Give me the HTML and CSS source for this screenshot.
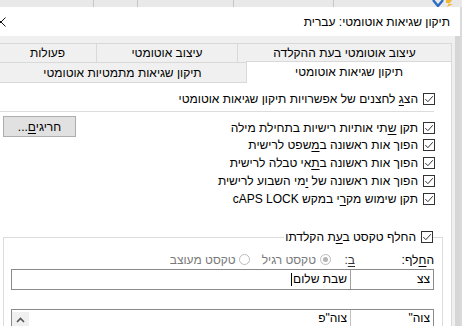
FILE: index.html
```html
<!DOCTYPE html>
<html lang="he" dir="rtl">
<head>
<meta charset="utf-8">
<link rel="stylesheet" href="styles.css">
</head>
<body>
<div class="ribbon">
  <span class="seg s1"></span><span class="seg s2"></span><span class="seg s3"></span><span class="seg s4"></span>
  <svg class="ricon" viewBox="0 0 24 7" width="24" height="7"><path d="M1 0 L6 6 L11 0" fill="none" stroke="#2b6cc4" stroke-width="2.4"/><path d="M14 0 L20 0 L17 4 L21 4 L15 7 L17 3 L14 3 Z" fill="#f2b632"/></svg>
</div>
<div class="dialog">
  <div class="titlebar">
    <span class="title">תיקון שגיאות אוטומטי: עברית</span>
    <svg class="close" viewBox="0 0 10 10" width="10" height="10"><path d="M0.5 0.5 L9.5 9.5 M9.5 0.5 L0.5 9.5" stroke="#111" stroke-width="1"/></svg>
  </div>
  <div class="dbody">
    <div class="tabrow row1">
      <div class="tab w1">עיצוב אוטומטי בעת ההקלדה</div>
      <div class="tab w2">עיצוב אוטומטי</div>
      <div class="tab grow">פעולות</div>
    </div>
    <div class="tabrow row2">
      <div class="tab sel">תיקון שגיאות אוטומטי</div>
      <div class="tab grow">תיקון שגיאות מתמטיות אוטומטי</div>
    </div>
    <div class="panel">
      <div class="chk first">
        <svg class="box" viewBox="0 0 12 12"><rect x=".5" y=".5" width="11" height="11" fill="#fff" stroke="#333"/><path d="M2.3 6.1 L4.9 8.7 L9.8 3.2" fill="none" stroke="#333"/></svg>
        <span>הצ<u>ג</u> לחצנים של אפשרויות תיקון שגיאות אוטומטי</span>
      </div>
      <div class="sep"></div>
      <div class="sect">
        <div class="checks">
          <div class="chk">
            <svg class="box" viewBox="0 0 12 12"><rect x=".5" y=".5" width="11" height="11" fill="#fff" stroke="#333"/><path d="M2.3 6.1 L4.9 8.7 L9.8 3.2" fill="none" stroke="#333"/></svg>
            <span>תקן <u>ש</u>תי אותיות רישיות בתחילת מילה</span>
          </div>
          <div class="chk">
            <svg class="box" viewBox="0 0 12 12"><rect x=".5" y=".5" width="11" height="11" fill="#fff" stroke="#333"/><path d="M2.3 6.1 L4.9 8.7 L9.8 3.2" fill="none" stroke="#333"/></svg>
            <span>הפוך אות ראשונה ב<u>מ</u>שפט לרישית</span>
          </div>
          <div class="chk">
            <svg class="box" viewBox="0 0 12 12"><rect x=".5" y=".5" width="11" height="11" fill="#fff" stroke="#333"/><path d="M2.3 6.1 L4.9 8.7 L9.8 3.2" fill="none" stroke="#333"/></svg>
            <span>הפוך אות ראשונה ב<u>ת</u>אי טבלה לרישית</span>
          </div>
          <div class="chk">
            <svg class="box" viewBox="0 0 12 12"><rect x=".5" y=".5" width="11" height="11" fill="#fff" stroke="#333"/><path d="M2.3 6.1 L4.9 8.7 L9.8 3.2" fill="none" stroke="#333"/></svg>
            <span>הפוך אות ראשונה של <u>י</u>מי השבוע לרישית</span>
          </div>
          <div class="chk">
            <svg class="box" viewBox="0 0 12 12"><rect x=".5" y=".5" width="11" height="11" fill="#fff" stroke="#333"/><path d="M2.3 6.1 L4.9 8.7 L9.8 3.2" fill="none" stroke="#333"/></svg>
            <span>תקן שימוש מק<u>ר</u>י במקש cAPS LOCK</span>
          </div>
        </div>
        <button class="btn">חריגי<u>ם</u>...</button>
      </div>
      <fieldset class="group">
        <legend class="chk leg">
          <svg class="box" viewBox="0 0 12 12"><rect x=".5" y=".5" width="11" height="11" fill="#fff" stroke="#333"/><path d="M2.3 6.1 L4.9 8.7 L9.8 3.2" fill="none" stroke="#333"/></svg>
          <span>החלף טקסט ב<u>ע</u>ת הקלדתו</span>
        </legend>
        <div class="rrow">
          <span class="lbl">ה<u>ח</u>לף:</span>
          <span class="lbl2"><u>ב</u>:</span>
          <span class="radio on"></span>
          <span class="dis">טקסט רגיל</span>
          <span class="radio"></span>
          <span class="dis">טקסט מעוצב</span>
        </div>
        <div class="inputs">
          <div class="cell c1">צצ</div>
          <div class="cell c2">שבת שלום<span class="caret"></span></div>
        </div>
        <div class="list">
          <div class="cell c1">צוה"</div>
          <div class="cell c2">צוה"פ</div>
          <div class="scroll"><svg viewBox="0 0 9 6" width="9" height="6"><path d="M1 5 L4.5 1.5 L8 5" fill="none" stroke="#555" stroke-width="1.6"/></svg></div>
        </div>
      </fieldset>
    </div>
  </div>
</div>
</body>
</html>
```
FILE: styles.css
```css
* { box-sizing: border-box; margin: 0; padding: 0; }
html, body { width: 462px; height: 326px; overflow: hidden; }
body {
  background: #dadada;
  font-family: "Liberation Sans", "DejaVu Sans", sans-serif;
  font-size: 12px;
  color: #000;
}
u { text-underline-offset: 2px; }

.ribbon {
  height: 7px;
  background: #e9e9e9;
  display: flex;
  direction: ltr;
}
.seg { height: 7px; border-right: 1px solid #c6c6c6; flex: none; }
.s1 { width: 94px; }
.s2 { width: 44px; }
.s3 { width: 96px; }
.s4 { width: 100px; }
.ricon { margin-left: 98px; flex: none; }

.dialog {
  width: 470px;
  margin-right: 2px;
  height: 319px;
  display: flex;
  flex-direction: column;
}
.titlebar {
  height: 29px;
  background: #fff;
  display: flex;
  align-items: center;
  padding-right: 10px;
  flex: none;
}
.title { font-size: 12px; }
.close { margin-right: auto; margin-left: 6px; flex: none; }

.dbody {
  flex: 1;
  background: linear-gradient(to left, #d6d6d6 0, #d6d6d6 5px, #f0f0f0 5px);
  padding: 7px 8px 0 8px;
  display: flex;
  flex-direction: column;
}

.tabrow { display: flex; flex: none; }
.tab {
  flex: none;
  border: 1px solid #d9d9d9;
  margin-left: -1px;
  text-align: center;
  height: 20px;
  line-height: 18px;
  white-space: nowrap;
  background: #f0f0f0;
}
.tab.grow { flex: 1; margin-left: 0; }
.w1 { width: 215px; }
.w2 { width: 142px; }
.row2 { margin-top: -1px; }
.row2 .tab { border-bottom: none; height: 20px; line-height: 20px; }
.row2 .tab.sel {
  width: 206px;
  background: #fff;
  margin-top: -1px;
  height: 22px;
  margin-bottom: -1px;
  line-height: 20px;
  position: relative;
  z-index: 1;
}

.panel {
  flex: 1;
  background: #fff;
  border: 1px solid #d9d9d9;
  border-bottom: none;
  padding: 7px 16px 0 0;
}

.chk {
  display: flex;
  align-items: center;
  gap: 5px;
  height: 18px;
  white-space: nowrap;
}
.box { width: 12px; height: 12px; flex: none; }

.sep {
  height: 1px;
  background: #dcdcdc;
  margin: 3px 1px 0 0;
}

.sect {
  display: flex;
  align-items: flex-start;
  justify-content: space-between;
}
.checks { margin-top: 6.7px; }
.checks .chk { height: 17.8px; }
.btn {
  margin-top: 4px;
  margin-left: 4px;
  width: 73px;
  height: 21px;
  background: #e1e1e1;
  border: 1px solid #adadad;
  font-family: inherit;
  font-size: 12px;
  color: #000;
  direction: rtl;
}

.group {
  margin: 22px -8px 0 4px;
  border: 1px solid #dcdcdc;
  border-bottom: none;
  padding: 7px 8px 0 7px;
  min-width: 0;
}
.leg { padding: 0; height: 15px; margin-right: 1px; }
.leg span { padding-left: 1px; }

.rrow {
  display: flex;
  align-items: center;
  height: 16px;
  white-space: nowrap;
}
.lbl { width: 79px; }
.lbl2 { width: 14px; color: #333; }
.radio {
  width: 11px;
  height: 11px;
  border: 1px solid #bcbcbc;
  border-radius: 50%;
  margin: 0 10px 0 4px;
  display: grid;
  place-items: center;
  flex: none;
  background: #fff;
}
.radio.on::after {
  content: "";
  width: 5px;
  height: 5px;
  border-radius: 50%;
  background: #b4b4b4;
}
.radio + .dis + .radio { margin-right: 12px; margin-left: 3px; }
.dis { color: #7a7a7a; }

.inputs, .list {
  display: flex;
  border: 1px solid #8a8a8a;
  height: 21px;
  margin-top: 1px;
}
.list { margin-top: 19px; height: 30px; border-bottom: none; }
.cell {
  height: 100%;
  padding: 0 3px;
  line-height: 19px;
  white-space: nowrap;
}
.c1 { width: 83px; border-left: 1px solid #8a8a8a; flex: none; }
.c2 { flex: 1; display: flex; align-items: center; }
.inputs .c1 { border-left-color: #a0a0a0; }
.caret { width: 1px; height: 13px; background: #000; margin-right: 1px; }
.list .c1, .list .c2 { height: 16px; line-height: 16px; }
.list .c1 { border-left-color: #c0c0c0; }
.list .c2 { align-items: center; }
.scroll {
  width: 17px;
  flex: none;
  margin-top: 2px;
  background: #f0f0f0;
  display: flex;
  justify-content: center;
  padding-top: 5px;
}
```
